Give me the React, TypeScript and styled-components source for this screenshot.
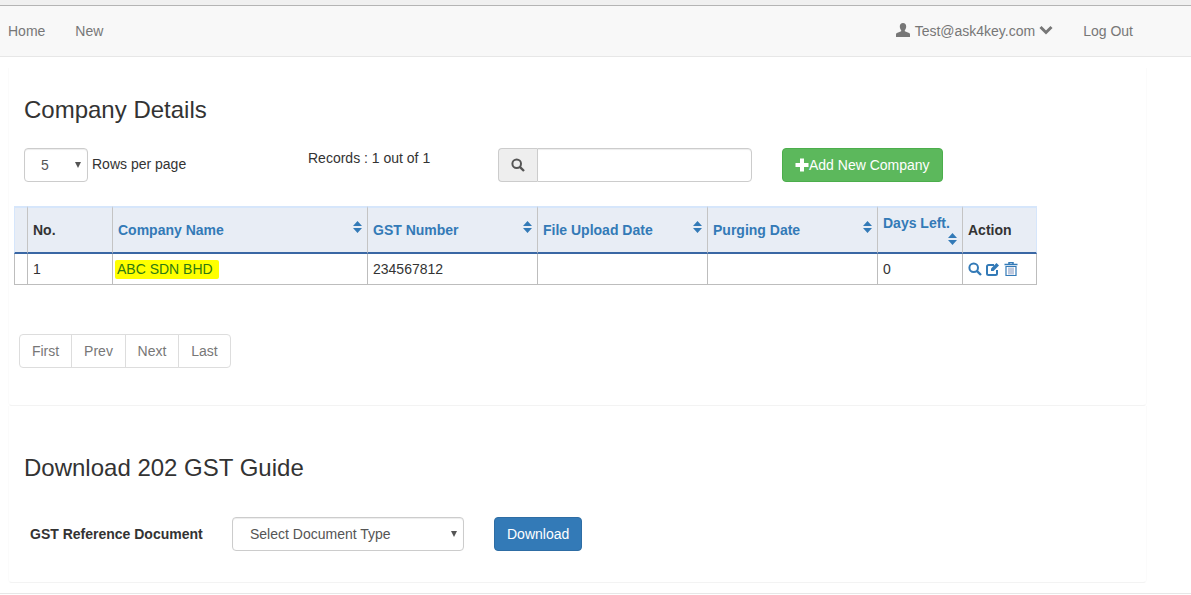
import styled, { createGlobalStyle } from 'styled-components';

const GlobalStyle = createGlobalStyle`
  html, body {
    margin: 0;
    padding: 0;
    background: #fff;
    overflow: hidden;
  }
  body {
    font-family: "Liberation Sans", Arial, sans-serif;
    font-size: 14px;
    line-height: 20px;
    color: #333;
  }
  * {
    box-sizing: border-box;
  }
`;

const Page = styled.div`
  height: 595px;
  display: flex;
  flex-direction: column;
  background: #fff;
`;

const TopStrip = styled.div`
  flex: none;
  height: 6px;
  background: #f0f0f0;
  border-bottom: 1px solid #b4b4b4;
`;

const Navbar = styled.nav`
  flex: none;
  height: 51px;
  display: flex;
  align-items: center;
  justify-content: space-between;
  padding: 0 58px 0 8px;
  background: #f8f8f8;
  border-bottom: 1px solid #e7e7e7;
`;

const NavGroup = styled.div<{ $gap: number }>`
  display: flex;
  align-items: center;
  gap: ${props => props.$gap}px;
`;

const NavLink = styled.a`
  display: inline-flex;
  align-items: center;
  color: #777;
  text-decoration: none;
`;

const Content = styled.main`
  flex: none;
  width: 1139px;
  margin: 11px 0 0 8px;
`;

const Section = styled.section<{ $height: number; $top: number }>`
  height: ${props => props.$height}px;
  padding-top: ${props => props.$top}px;
  border-bottom: 1px solid #f3f3f3;
  border-left: 1px solid #fbfbfb;
  border-right: 1px solid #fbfbfb;
  border-radius: 0 0 4px 4px;
`;

const Title = styled.h3`
  margin: 0 0 0 15px;
  font-size: 24px;
  font-weight: 500;
  line-height: 26px;
  color: #333;
`;

const Toolbar = styled.div`
  display: flex;
  align-items: flex-start;
  height: 34px;
  margin: 25px 0 0 15px;
`;

const SelectBox = styled.div<{ $width: number }>`
  position: relative;
  flex: none;
  width: ${props => props.$width}px;
  height: 34px;
  &::after {
    content: '';
    position: absolute;
    top: 14px;
    right: 7px;
    border-left: 3.5px solid transparent;
    border-right: 3.5px solid transparent;
    border-top: 6px solid #555;
    pointer-events: none;
  }
`;

const Select = styled.select<{ $indent: number }>`
  appearance: none;
  width: 100%;
  height: 34px;
  padding: 6px 12px 6px ${props => props.$indent}px;
  font-family: inherit;
  font-size: 14px;
  color: #555;
  background: #fff;
  border: 1px solid #ccc;
  border-radius: 4px;
  box-shadow: inset 0 1px 1px rgba(0, 0, 0, .075);
`;

const RowsLabel = styled.span`
  width: 216px;
  margin: 6px 0 0 4px;
`;

const Records = styled.span`
  width: 190px;
`;

const SearchGroup = styled.div`
  display: flex;
  width: 254px;
  height: 34px;
`;

const SearchAddon = styled.span`
  width: 39px;
  display: flex;
  align-items: center;
  justify-content: center;
  background: #eee;
  border: 1px solid #ccc;
  border-right: 0;
  border-radius: 4px 0 0 4px;
  color: #555;
`;

const SearchInput = styled.input`
  flex: 1;
  min-width: 0;
  border: 1px solid #ccc;
  border-radius: 0 4px 4px 0;
  box-shadow: inset 0 1px 1px rgba(0, 0, 0, .075);
`;

const Button = styled.button<{ $bg: string; $edge: string; $left: number }>`
  display: inline-flex;
  align-items: center;
  height: 34px;
  margin-left: ${props => props.$left}px;
  padding: 6px 12px;
  font-family: inherit;
  font-size: 14px;
  color: #fff;
  background: ${props => props.$bg};
  border: 1px solid ${props => props.$edge};
  border-radius: 4px;
`;

const Table = styled.table`
  width: 1023px;
  margin: 24px 0 0 5px;
  table-layout: fixed;
  border-collapse: separate;
  border-spacing: 0;
  color: #333;
`;

const HeadCell = styled.th<{ $link?: boolean }>`
  position: relative;
  height: 48px;
  padding: 0 4px 0 5px;
  text-align: left;
  font-weight: 700;
  font-size: 14px;
  color: ${props => (props.$link ? '#337ab7' : '#333')};
  background: #e8edf5;
  border-top: 2px solid #d6e6fb;
  border-bottom: 2px solid #3a67a4;
  border-left: 1px solid #c4c4c4;
  &:first-child {
    border-left: 1px solid #d6e6fb;
  }
  &:last-child {
    border-right: 1px solid #d6e6fb;
  }
`;

const SortMark = styled.span`
  position: absolute;
  top: 13px;
  right: 5px;
  display: flex;
`;

const DaysCell = styled.div`
  display: flex;
  flex-direction: column;
  line-height: 20px;
`;

const DaysSort = styled.span`
  display: flex;
  justify-content: flex-end;
  height: 14px;
  padding-right: 1px;
`;

const BodyCell = styled.td`
  height: 31px;
  padding: 0 4px 0 5px;
  border-bottom: 1px solid #bdbdbd;
  border-left: 1px solid #bdbdbd;
  &:last-child {
    border-right: 1px solid #bdbdbd;
  }
`;

const Marked = styled.span`
  display: inline-block;
  margin-left: -3px;
  padding: 0 6px 0 2px;
  height: 19px;
  line-height: 19px;
  color: #2f7a10;
  background: #ffff00;
  border-radius: 2px;
`;

const ActionIcons = styled.div`
  display: flex;
  align-items: center;
  gap: 4px;
  color: #337ab7;
`;

const Pager = styled.div`
  display: inline-flex;
  margin: 49px 0 0 10px;
`;

const PageItem = styled.a<{ $width: number }>`
  width: ${props => props.$width}px;
  height: 34px;
  display: flex;
  align-items: center;
  justify-content: center;
  color: #777;
  background: #fff;
  border: 1px solid #ddd;
  margin-left: -1px;
  &:first-child {
    margin-left: 0;
    border-radius: 4px 0 0 4px;
  }
  &:last-child {
    border-radius: 0 4px 4px 0;
  }
`;

const GuideRow = styled.div`
  display: flex;
  align-items: center;
  margin: 36px 0 0 21px;
`;

const GuideLabel = styled.label`
  width: 202px;
  font-weight: 700;
`;

const Footer = styled.div`
  flex: none;
  margin-top: 10px;
  border-top: 1px solid #e7e7e7;
`;

const UserIcon = () => (
  <svg width="14" height="14" viewBox="0 0 14 14" fill="#777" style={{ marginRight: 5, marginTop: -2 }}>
    <path d="M7 0C5 0 3.800 1.400 3.800 3.600c0 1.500.6 2.900 1.400 3.700v1L.9 10.100C.3 10.400 0 10.900 0 11.500V14h14v-2.500c0-.6-.3-1.100-.9-1.400L8.800 8.300v-1c.8-.8 1.400-2.200 1.400-3.700C10.200 1.400 9 0 7 0z" />
  </svg>
);

const ChevronIcon = () => (
  <svg width="14" height="10" viewBox="0 0 14 10" fill="none" stroke="#777" strokeWidth="3" style={{ marginLeft: 4, marginTop: -3 }}>
    <path d="M1.500 2 7 7.500 12.500 2" />
  </svg>
);

const SearchIcon = () => (
  <svg width="14" height="14" viewBox="0 0 14 14" fill="none" stroke="currentColor">
    <circle cx="5.700" cy="5.700" r="4.300" strokeWidth="2" />
    <path d="M8.800 8.800 13 13" strokeWidth="2.400" />
  </svg>
);

const PlusIcon = () => (
  <svg width="14" height="14" viewBox="0 0 14 14" fill="#fff">
    <path d="M5 .5h4V5h4.500v4H9v4.500H5V9H.5V5H5z" />
  </svg>
);

const SortIcon = () => (
  <svg width="9" height="12" viewBox="0 0 9 12" fill="#337ab7">
    <path d="M4.500 0 9 5H0zM0 7h9l-4.500 5z" />
  </svg>
);

const EditIcon = () => (
  <svg width="14" height="14" viewBox="0 0 14 14" fill="none" stroke="#337ab7">
    <path d="M11 8v3.500a1.500 1.500 0 0 1-1.500 1.500h-7A1.500 1.500 0 0 1 1 11.500v-7A1.500 1.500 0 0 1 2.500 3H8" strokeWidth="2" />
    <path d="M5 6.500 10.500 1 13 3.500 7.500 9H5z" fill="#337ab7" stroke="none" />
  </svg>
);

const TrashIcon = () => (
  <svg width="14" height="14" viewBox="0 0 14 14" fill="none" stroke="#337ab7">
    <path d="M.5 2.500h13M5 2.500V.5h4v2" strokeWidth="1.500" />
    <path d="M2 4.500h10v9H2z" strokeWidth="1.200" />
    <path d="M5 5.500v7M7 5.500v7M9 5.500v7" stroke="#7f93bd" />
  </svg>
);

const columns = [
  { label: '', width: 13 },
  { label: 'No.', width: 85 },
  { label: 'Company Name', width: 255, sort: true },
  { label: 'GST Number', width: 170, sort: true },
  { label: 'File Upload Date', width: 170, sort: true },
  { label: 'Purging Date', width: 170, sort: true },
];

const pages = [
  { label: 'First', width: 53 },
  { label: 'Prev', width: 55 },
  { label: 'Next', width: 54 },
  { label: 'Last', width: 53 },
];

export default function App() {
  return (
    <Page>
      <GlobalStyle />
      <TopStrip />
      <Navbar>
        <NavGroup $gap={30}>
          <NavLink>Home</NavLink>
          <NavLink>New</NavLink>
        </NavGroup>
        <NavGroup $gap={30}>
          <NavLink><UserIcon />Test@ask4key.com<ChevronIcon /></NavLink>
          <NavLink>Log Out</NavLink>
        </NavGroup>
      </Navbar>

      <Content>
        <Section $height={338} $top={29}>
          <Title>Company Details</Title>
          <Toolbar>
            <SelectBox $width={64}>
              <Select $indent={16} defaultValue="5">
                <option value="5">5</option>
                <option value="10">10</option>
              </Select>
            </SelectBox>
            <RowsLabel>Rows per page</RowsLabel>
            <Records>Records : 1 out of 1</Records>
            <SearchGroup>
              <SearchAddon><SearchIcon /></SearchAddon>
              <SearchInput />
            </SearchGroup>
            <Button $bg="#5cb85c" $edge="#4cae4c" $left={30}><PlusIcon />Add New Company</Button>
          </Toolbar>

          <Table>
            <colgroup>
              {columns.map((column, index) => <col key={index} width={column.width} />)}
              <col width={85} />
              <col width={75} />
            </colgroup>
            <thead>
              <tr>
                {columns.map((column, index) => (
                  <HeadCell key={index} $link={column.sort}>
                    {column.label}
                    {column.sort && <SortMark><SortIcon /></SortMark>}
                  </HeadCell>
                ))}
                <HeadCell $link>
                  <DaysCell>
                    Days Left.
                    <DaysSort><SortIcon /></DaysSort>
                  </DaysCell>
                </HeadCell>
                <HeadCell>Action</HeadCell>
              </tr>
            </thead>
            <tbody>
              <tr>
                <BodyCell />
                <BodyCell>1</BodyCell>
                <BodyCell><Marked>ABC SDN BHD</Marked></BodyCell>
                <BodyCell>234567812</BodyCell>
                <BodyCell />
                <BodyCell />
                <BodyCell>0</BodyCell>
                <BodyCell>
                  <ActionIcons>
                    <SearchIcon />
                    <EditIcon />
                    <TrashIcon />
                  </ActionIcons>
                </BodyCell>
              </tr>
            </tbody>
          </Table>

          <Pager>
            {pages.map(page => <PageItem key={page.label} $width={page.width}>{page.label}</PageItem>)}
          </Pager>
        </Section>

        <Section $height={177} $top={49}>
          <Title>Download 202 GST Guide</Title>
          <GuideRow>
            <GuideLabel>GST Reference Document</GuideLabel>
            <SelectBox $width={232}>
              <Select $indent={17} defaultValue="">
                <option value="">Select Document Type</option>
              </Select>
            </SelectBox>
            <Button $bg="#337ab7" $edge="#2e6da4" $left={30}>Download</Button>
          </GuideRow>
        </Section>
      </Content>

      <Footer />
    </Page>
  );
}
